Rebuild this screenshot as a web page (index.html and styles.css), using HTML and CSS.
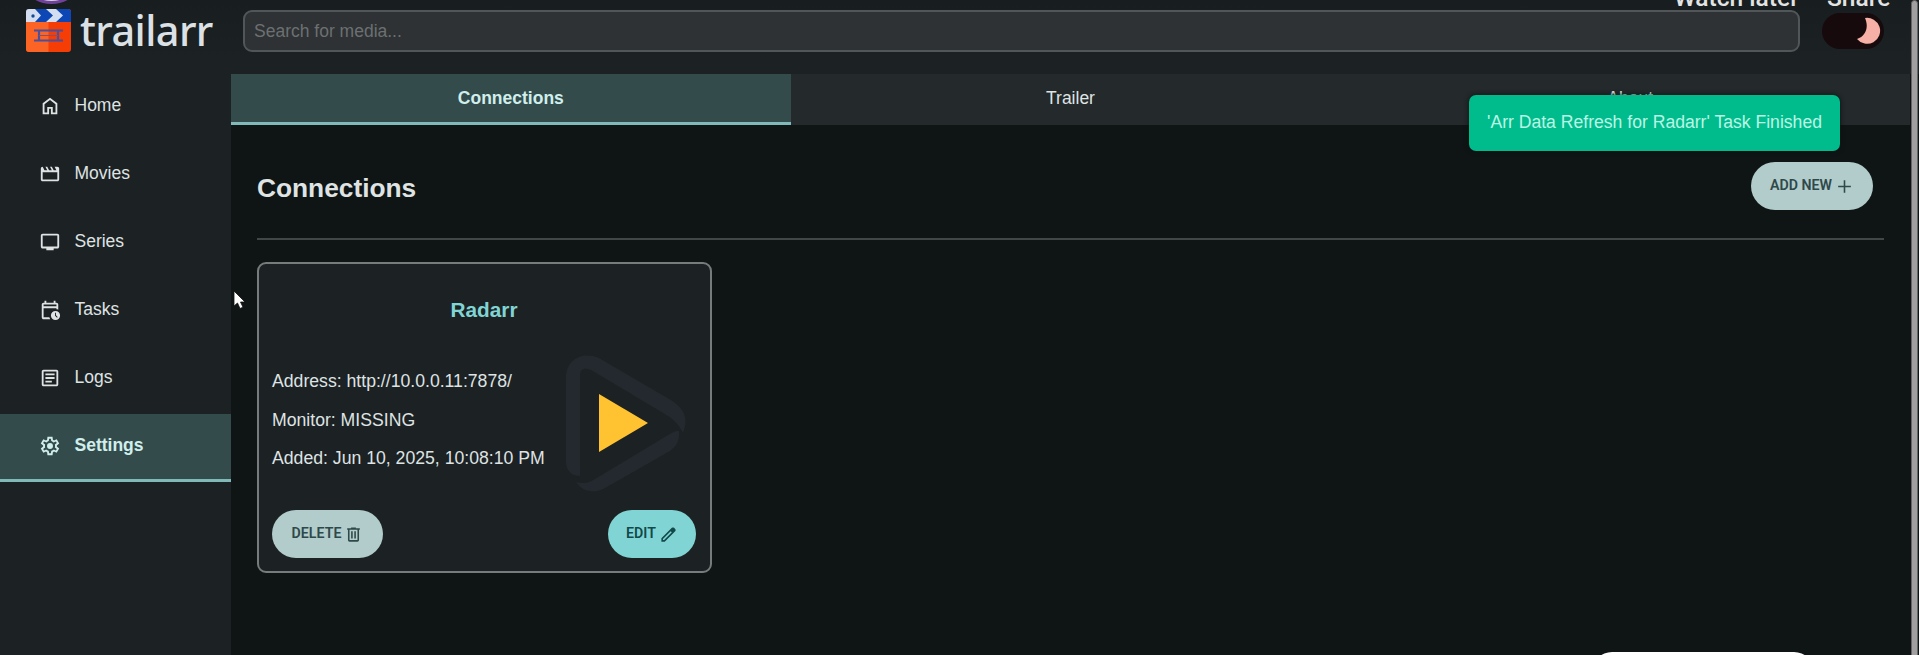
FILE: index.html
```html
<!DOCTYPE html>
<html lang="en">
<head>
<meta charset="utf-8">
<title>Trailarr</title>
<link rel="stylesheet" href="styles.css">
</head>
<body>
<div class="app">
  <header class="header">
    <div class="brand">
      <svg class="brand-mark" width="45" height="43" viewBox="0 0 45 43">
        <defs><clipPath id="mark"><rect width="45" height="43" rx="3"/></clipPath></defs>
        <g clip-path="url(#mark)">
          <rect width="45" height="43" fill="#f53d05"/>
          <rect y="13" width="22.500" height="30" fill="#fb6424"/>
          <rect width="45" height="13" fill="#0d47b5"/>
          <path d="M0 0H9L15 6.500 9 13H0ZM20 0H30L37 6.500 30 13H20L27 6.500Z" fill="#d3dff0"/>
          <circle cx="7" cy="7" r="1.700" fill="#174a94"/>
          <path d="M8 21.500H37M8 31.500H37M13 21.500V31.500M32 21.500V31.500" stroke="#4b4f9c" stroke-width="2.200" fill="none"/>
          <path d="M13 26.500H32" stroke="#83506f" stroke-width="1"/>
        </g>
      </svg>
      <span class="brand-name">trailarr</span>
    </div>
    <input class="search" type="text" placeholder="Search for media...">
    <div class="theme-toggle">
      <svg width="24" height="28" viewBox="0 0 24 28"><path d="M8 1A13 13 0 1 1 0 22C9 19 12 10 8 1Z" fill="#f6b0a5"/></svg>
    </div>
  </header>
  <div class="body">
    <nav class="sidebar">
      <a class="nav-item"><svg class="icon" viewBox="0 -960 960 960"><path d="M240-200h120v-240h240v240h120v-360L480-740 240-560v360Zm-80 80v-480l320-240 320 240v480H520v-240h-80v240H160Z"/></svg>Home</a>
      <a class="nav-item"><svg class="icon" viewBox="0 -960 960 960"><path d="m160-800 80 160h120l-80-160h80l80 160h120l-80-160h80l80 160h120l-80-160h120q33 0 56.500 23.500T880-720v480q0 33-23.500 56.500T800-160H160q-33 0-56.500-23.500T80-240v-480q0-33 23.500-56.500T160-800Zm0 240v320h640v-320H160Z"/></svg>Movies</a>
      <a class="nav-item"><svg class="icon" viewBox="0 -960 960 960"><path d="M320-120v-80H160q-33 0-56.500-23.500T80-280v-480q0-33 23.500-56.500T160-840h640q33 0 56.500 23.500T880-760v480q0 33-23.500 56.500T800-200H640v80H320ZM160-280h640v-480H160v480Z"/></svg>Series</a>
      <a class="nav-item"><svg class="icon" viewBox="0 -960 960 960"><path d="M200-640h560v-80H200v80Zm0 0v-80 80Zm0 560q-33 0-56.500-23.500T120-160v-560q0-33 23.500-56.500T200-800h40v-80h80v80h320v-80h80v80h40q33 0 56.500 23.500T840-720v227q-19-9-39-15t-41-9v-43H200v400h252q7 22 16.500 42T491-80H200Zm520 40q-83 0-141.500-58.500T520-240q0-83 58.500-141.500T720-440q83 0 141.500 58.500T920-240q0 83-58.500 141.500T720-40Zm67-105 28-28-75-75v-112h-40v128l87 87Z"/></svg>Tasks</a>
      <a class="nav-item"><svg class="icon" viewBox="0 -960 960 960"><path d="M280-280h280v-80H280v80Zm0-160h400v-80H280v80Zm0-160h400v-80H280v80Zm-80 480q-33 0-56.500-23.500T120-200v-560q0-33 23.500-56.500T200-840h560q33 0 56.500 23.500T840-760v560q0 33-23.500 56.500T760-120H200Zm0-80h560v-560H200v560Z"/></svg>Logs</a>
      <a class="nav-item active"><svg class="icon" viewBox="0 -960 960 960"><path d="m370-80-16-128q-13-5-24.500-12T307-235l-119 50L78-375l103-78q-1-7-1-13.500v-27q0-6.500 1-13.500L78-585l110-190 119 50q11-8 23-15t24-12l16-128h220l16 128q13 5 24.500 12t22.500 15l119-50 110 190-103 78q1 7 1 13.500v27q0 6.500-2 13.500l103 78-110 190-118-50q-11 8-23 15t-24 12L590-80H370Zm70-80h79l14-106q31-8 57.500-23.500T639-327l99 41 39-68-86-65q5-14 7-29.500t2-31.500q0-16-2-31.500t-7-29.500l86-65-39-68-99 42q-22-23-48.500-38.500T533-694l-13-106h-79l-14 106q-31 8-57.500 23.500T321-633l-99-41-39 68 86 64q-5 15-7 30t-2 32q0 16 2 31t7 30l-86 65 39 68 99-42q22 23 48.500 38.500T427-266l13 106Z"/><circle cx="480" cy="-480" r="130"/></svg>Settings</a>
    </nav>
    <main class="main">
      <div class="tabs">
        <a class="tab active">Connections</a>
        <a class="tab">Trailer</a>
        <a class="tab">About</a>
      </div>
      <section class="content">
        <div class="content-head">
          <h1>Connections</h1>
          <button class="btn soft add">ADD NEW <svg viewBox="0 -960 960 960"><path d="M440-440H160v-80h280v-280h80v280h280v80H520v280h-80v-280Z"/></svg></button>
        </div>
        <article class="card">
          <h2>Radarr</h2>
          <div class="card-body">
            <div class="details">
              <p>Address: http://10.0.0.11:7878/</p>
              <p>Monitor: MISSING</p>
              <p>Added: Jun 10, 2025, 10:08:10 PM</p>
            </div>
            <svg class="radarr" width="122" height="137" viewBox="0 0 122 137">
              <path d="M15 121C6 121 1 115 1 107V22C1 4 18-4 34 3L106 45C119 53 124 63 118 78C112 67 108 64 98 58L26 15C19 12 15 14 15 21Z" fill="#24282f"/>
              <path d="M11 127C19 129 24 128 30 124L103 80Q112 75 114 76C115 85 112 91 105 96L42 132C31 139 18 138 11 127Z" fill="#24282f"/>
              <path d="M34 39V97L83 68Z" fill="#ffc230"/>
            </svg>
          </div>
          <div class="card-actions">
            <button class="btn soft delete">DELETE <svg viewBox="0 -960 960 960"><path d="M280-120q-33 0-56.500-23.500T200-200v-520h-40v-80h200v-40h240v40h200v80h-40v520q0 33-23.500 56.500T680-120H280Zm400-600H280v520h400v-520ZM360-280h80v-360h-80v360Zm160 0h80v-360h-80v360Z"/></svg></button>
            <button class="btn primary edit">EDIT <svg viewBox="0 -960 960 960"><path d="M200-200h57l391-391-57-57-391 391v57Zm-80 80v-170l528-527q12-11 26.500-17t30.500-6q16 0 31 6t26 18l55 56q12 11 17.500 26t5.500 30q0 16-5.500 30.500T817-647L290-120H120Z"/></svg></button>
          </div>
        </article>
      </section>
    </main>
  </div>
  <div class="avatar"></div>
  <div class="video-actions"><span>Watch later</span><span>Share</span></div>
  <div class="toast">'Arr Data Refresh for Radarr' Task Finished</div>
  <div class="scrollbar"></div>
  <div class="bottom-pill"></div>
  <svg class="cursor" width="14" height="20" viewBox="0 0 14 20"><path d="M1 1V16L4.500 13 7 18.500 10 17.200 7.500 12H12Z" fill="#fff" stroke="#111" stroke-width=".8"/></svg>
</div>
</body>
</html>
```
FILE: styles.css
```css
* { box-sizing: border-box; }
body { margin: 0; background: #0f1515; color: #dfe3e3; font: 17.5px "Liberation Sans", Arial, sans-serif; }
h1, h2, p { margin: 0; }
.app { position: relative; width: 1919px; height: 655px; overflow: hidden; display: flex; flex-direction: column; }
.header { height: 74px; flex: none; display: flex; align-items: flex-start; background: linear-gradient(#181d1f, #1c2123 60px); }
.brand { width: 243px; height: 62px; padding: 9px 0 0 26px; display: flex; gap: 9px; }
.brand-mark { flex: none; }
.brand-name { font: 500 41.5px/42px "Noto Sans", sans-serif; letter-spacing: -.6px; color: #dce1e5; }
.search { width: 1557px; height: 42px; margin-top: 10px; padding: 0 9px 0; border: 2px solid #515658; border-radius: 9px; background: #2e3234; font: inherit; color: #dfe3e3; }
.search::placeholder { color: #6c7072; opacity: 1; }
.theme-toggle { width: 62px; height: 36px; margin: 13px 0 0 22px; padding: 4px 3px 0 0; border-radius: 18px; background: #160a0d; display: flex; justify-content: flex-end; }
.body { flex: 1; display: flex; }
.sidebar { width: 231px; background: #1c2123; }
.nav-item { height: 68px; padding: 0 0 2px 39px; display: flex; align-items: center; gap: 13.5px; border-bottom: 3px solid transparent; }
.icon { width: 22px; height: 22px; fill: currentColor; }
.nav-item.active, .tab.active { background: #344b4b; border-bottom-color: #80b9b8; color: #d0eeec; font-weight: bold; }
.main { flex: 1; }
.tabs { width: 1679px; height: 51px; display: grid; grid-template-columns: repeat(3, 1fr); background: #24292b; }
.tab { display: flex; align-items: center; justify-content: center; border-bottom: 3px solid transparent; }
.content { padding: 37px 35px 0 26px; }
.content-head { width: 1627px; height: 78px; padding-right: 11px; border-bottom: 2px solid #414647; display: flex; justify-content: space-between; align-items: flex-start; }
h1 { font-size: 26.3px; line-height: 30px; margin-top: 11px; }
.btn { height: 48px; border: 0; border-radius: 24px; display: flex; align-items: center; justify-content: center; gap: 3px; padding: 0 0 2px; font: 600 14.2px Roboto, sans-serif; }
.btn svg { width: 19px; height: 19px; fill: currentColor; position: relative; top: 1px; }
.soft { background: #b1cccb; color: #2f484a; }
.primary { background: #80d5d4; color: #12494a; }
.add { width: 122px; }
.delete { width: 111px; }
.edit { width: 88px; }
.card { width: 455px; height: 311px; margin-top: 22px; padding: 32px 14px 0 13px; border: 2px solid #777b7c; border-radius: 9px; background: #1c2123; }
h2 { font-size: 20.800px; line-height: 28px; text-align: center; color: #80d5d4; }
.card-body { height: 147px; margin-top: 31px; display: flex; justify-content: space-between; }
.details { padding-top: 7px; white-space: nowrap; font-size: 17.65px; }
.details p { height: 38.600px; line-height: 38px; }
.radarr { flex: none; margin-right: 9px; }
.card-actions { margin-top: 8px; display: flex; justify-content: space-between; }
.avatar { position: absolute; left: 18px; top: -63px; width: 67px; height: 67px; border: 3px solid #71429b; border-radius: 50%; background: #d8d3dc; }
.video-actions { position: absolute; left: 1674px; top: -16px; display: flex; gap: 28px; font: 500 24.600px/28px Roboto, sans-serif; color: #e2e3e3; white-space: nowrap; }
.toast { position: absolute; left: 1469px; top: 95px; width: 371px; height: 56px; border-radius: 7px; background: #00bc8c; color: #baf5e5; display: flex; align-items: center; justify-content: center; padding-bottom: 2px; white-space: nowrap; box-shadow: 0 0 5px #0b100f; font-size: 17.6px; }
.scrollbar { position: absolute; right: 1px; top: 0; width: 7px; height: 670px; border: 1px solid #656465; border-radius: 4px; background: #a29fa1; }
.bottom-pill { position: absolute; left: 1592px; top: 652px; width: 222px; height: 40px; border-radius: 20px; background: #fff; }
.cursor { position: absolute; left: 233px; top: 290px; }
```
